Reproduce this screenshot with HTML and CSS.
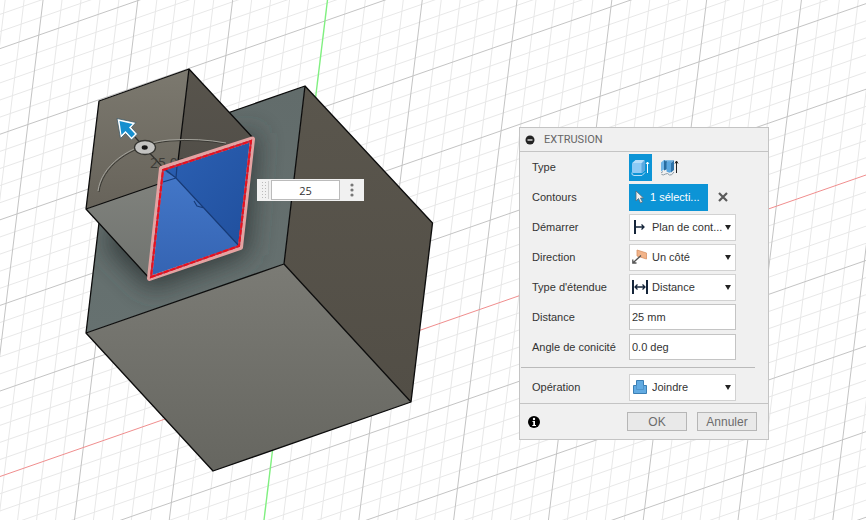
FILE: index.html
```html
<!DOCTYPE html>
<html lang="fr">
<head>
<meta charset="utf-8">
<title>Extrusion</title>
<link rel="stylesheet" href="styles.css">
</head>
<body>
<main class="viewport">
  <svg class="scene" viewBox="0 0 866 520" preserveAspectRatio="xMinYMin slice" aria-hidden="true">
    <defs>
      <linearGradient id="top-face" x1="0" y1="0" x2="0" y2="1"><stop offset="0" stop-color="#7c796f"/><stop offset="1" stop-color="#67635a"/></linearGradient>
      <linearGradient id="side-face" x1="0" y1="0" x2="0" y2="1"><stop offset="0" stop-color="#58544c"/><stop offset="1" stop-color="#4c4a46"/></linearGradient>
      <linearGradient id="low-face" x1="0" y1="0" x2="0" y2="1"><stop offset="0" stop-color="#80827d"/><stop offset="1" stop-color="#70736f"/></linearGradient>
      <linearGradient id="cube-left" x1="0" y1="0" x2="0" y2="1"><stop offset="0" stop-color="#626c6b"/><stop offset="1" stop-color="#667170"/></linearGradient>
      <linearGradient id="cube-right" x1="0" y1="0" x2="0" y2="1"><stop offset="0" stop-color="#5a564d"/><stop offset="1" stop-color="#524e46"/></linearGradient>
      <linearGradient id="cube-low" x1="0" y1="0" x2="0" y2="1"><stop offset="0" stop-color="#7b7b75"/><stop offset="1" stop-color="#666660"/></linearGradient>
      <linearGradient id="blue-left" x1="0" y1="0" x2="0" y2="1"><stop offset="0" stop-color="#4478c9"/><stop offset="1" stop-color="#3463b2"/></linearGradient>
      <linearGradient id="blue-right" x1="0" y1="0" x2="1" y2="1"><stop offset="0" stop-color="#2c61b4"/><stop offset="1" stop-color="#204f9d"/></linearGradient>
      <clipPath id="left-clip"><path d="M305 86 107 155 86 333 284 264Z"/></clipPath>
      <filter id="soft" x="-50%" y="-50%" width="200%" height="200%"><feGaussianBlur stdDeviation="13"/></filter>
    </defs>
    <path class="grid-minor" id="grid-minor"/>
    <path class="grid-major" id="grid-major"/>
    <path class="axis-x" d="M0 476.500 866 175"/>
    <path class="axis-y" d="M327.500 0 264 520"/>

    <path fill="url(#cube-left)" d="M305 86 107 155 86 333 284 264Z"/>
    <g clip-path="url(#left-clip)"><path filter="url(#soft)" fill="#363e3c" d="M160 160 258 132 248 254 150 290 104 244Z"/></g>
    <path fill="url(#cube-right)" d="M305 86 432.500 223 411 402 284 264Z"/>
    <path fill="url(#cube-low)" d="M284 264 411 402 213 471 86 333Z"/>
    <path class="edge" d="M305 86 107 155 86 333 213 471 411 402 432.500 223Z M305 86 284 264 M86 333 284 264 411 402"/>

    <path fill="url(#top-face)" d="M99 101 189 69 176 178 86 209Z"/>
    <path fill="url(#side-face)" d="M189 69 253 138 240 247 176 178Z"/>
    <path fill="url(#low-face)" d="M86 209 176 178 240 247 150 279Z"/>
    <path class="edge" d="M253 138 189 69 99 101 86 209 150 279 M189 69 176 178 86 209 M176 178 240 247"/>
    <path class="arc-shade" d="M99 192C102 168 128 145 170 141Q200 139 226 144"/>
    <path class="arc" d="M98 191C101 167 127 144 169 140Q200 138 226 143"/>
    <path class="stem" d="M135 137 200 208"/>
    <text class="measure" x="150" y="168">25.00</text>

    <path fill="url(#blue-left)" d="M162 169 176 178 240 247 150 279Z"/>
    <path fill="url(#blue-right)" d="M162 169 253 139 240 247 176 178Z"/>
    <path class="hidden-edge" d="M162 167 176 178 240 247M176 178 177 166M163 182 176 178M194 201 197 206 204 208"/>
    <path class="glow" d="M161.500 168.500 252.500 139 240.500 247.500 149.500 278.500Z"/>
    <path class="selected" d="M163 170 251 141 239 246 151 277Z"/>
    <path class="selected-dash" d="M163 170 251 141 239 246 151 277Z"/>

    <ellipse cx="145" cy="147.500" rx="10.500" ry="7" fill="#c3c3c1" stroke="#343430" stroke-width="1.300"/>
    <ellipse cx="144.700" cy="147.500" rx="3" ry="2.200" fill="#151515"/>
    <path d="M117 118.500 136 122.500 131.500 127.500 137.500 134 131.500 140 125.500 133.500 120.500 138.500Z" fill="#fff" stroke="#3d5a68" stroke-width=".8"/>
    <path d="M119.500 121 132.500 124 129 127.500 135 134 131.500 137.500 125.500 131 121.500 135Z" fill="#168fcf"/>
  </svg>

  <div class="value-box">
    <span class="grip"></span>
    <input class="value-input" type="text" value="25" aria-label="Valeur de distance">
    <button class="more" type="button" aria-label="Options">
      <svg width="6" height="16" viewBox="0 0 6 16"><g fill="#777"><circle cx="3" cy="3" r="1.600"/><circle cx="3" cy="8" r="1.600"/><circle cx="3" cy="13" r="1.600"/></g></svg>
    </button>
  </div>

  <form class="panel">
    <header class="panel-head">
      <button class="collapse" type="button" aria-label="Réduire"><svg width="10" height="10" viewBox="0 0 10 10"><circle cx="5" cy="5" r="4.500" fill="#222"/><path d="M2.500 5h5" stroke="#fff" stroke-width="1.200"/></svg></button>
      <h1 class="title">EXTRUSION</h1>
    </header>
    <div class="rows">
      <div class="row">
        <span class="label">Type</span>
        <div class="types">
          <button class="type active" type="button" aria-label="Extrusion solide">
            <svg width="19" height="19" viewBox="0 0 19 19"><path d="M1 14.500v2l2 1h8l3-3" fill="none" stroke="#b8ddf7" stroke-width="1"/><path d="M1 6Q1 5 2 4.300L4 2.800Q5 2 6 2h6.500Q14 2 14 3.500V12l-3 3H2q-1 0-1-1Z" fill="#8dcaf5"/><path d="M1.500 5 4.500 2H13l-2.500 3Z" fill="#b4ddfa"/><path d="M10.500 5.500 13.500 2.500Q14 3 14 3.500V12l-3.500 3Z" fill="#5ba8df"/><path d="M16.500 15V4M15 6l1.500-2L18 6" fill="none" stroke="#fff"/></svg>
          </button>
          <button class="type" type="button" aria-label="Extrusion fine">
            <svg width="19" height="19" viewBox="0 0 19 19"><path d="M1 15l2-1.500M1.500 16.500q2 1 4-.5t4 1q2 1 4.500-3" fill="none" stroke="#8c9aa5"/><path d="M1 4.500 4 2v9.500l-3 2Z" fill="#70b5e7"/><path d="M4 2h3.500v9L4 12.500Z" fill="#286c9f"/><path d="M6.500 4.500 9 2h4.500l-2.500 3v9q-1.500 1.500-4.500-.5Z" fill="#5aa6de"/><path d="M11 5 14 2v10l-3 2.500Z" fill="#2d73a9"/><path d="M4 2h9.500l-1.500 1.200H5.500Z" fill="#89bfe5"/><path d="M16.500 15V3M15 5.500l1.500-2.500L18 5.500" fill="none" stroke="#222"/></svg>
          </button>
        </div>
      </div>
      <div class="row">
        <span class="label">Contours</span>
        <div class="selection">
          <button class="pick" type="button">
            <svg width="10" height="14" viewBox="0 0 10 14"><path d="M1 1v10l2.500-2.500 2 4.500 2-1-2-4h3Z" fill="#eee" stroke="#596a76" stroke-width=".8"/></svg>
            <span>1 sélecti...</span>
          </button>
          <button class="clear" type="button" aria-label="Effacer la sélection"><svg width="10" height="10" viewBox="0 0 10 10"><path d="m1 1 8 8M9 1 1 9" stroke="#5a5a5a" stroke-width="2.200"/></svg></button>
        </div>
      </div>
      <div class="row">
        <label class="label" for="start">Démarrer</label>
        <div class="combo">
          <svg class="icon" width="16" height="16" viewBox="0 0 16 16"><path d="M3 1v14" stroke="#15253a" stroke-width="2"/><path d="M3 8h9M9.500 5.500 12 8l-2.500 2.500" fill="none" stroke="#15253a" stroke-width="1.300"/></svg>
          <select id="start"><option>Plan de cont...</option></select>
        </div>
      </div>
      <div class="row">
        <label class="label" for="direction">Direction</label>
        <div class="combo">
          <svg class="icon" width="16" height="16" viewBox="0 0 16 16"><path d="m5 1 9.500 3v6L5 7Z" fill="#f2b48a" stroke="#d89264" stroke-width=".8"/><path d="M9 6.500 .8 14M.8 10.500V14h3.700" fill="none" stroke="#555" stroke-width="1.300"/></svg>
          <select id="direction"><option>Un côté</option></select>
        </div>
      </div>
      <div class="row">
        <label class="label" for="extent">Type d'étendue</label>
        <div class="combo">
          <svg class="icon" width="16" height="16" viewBox="0 0 16 16"><path d="M1 1v14M15 1v14" stroke="#15253a" stroke-width="2"/><path d="M3 8h10M5.500 5.500 3 8l2.500 2.500M10.500 5.500 13 8l-2.500 2.500" fill="none" stroke="#15253a" stroke-width="1.300"/></svg>
          <select id="extent"><option>Distance</option></select>
        </div>
      </div>
      <div class="row">
        <label class="label" for="distance">Distance</label>
        <input class="field" id="distance" type="text" value="25 mm">
      </div>
      <div class="row">
        <label class="label" for="angle">Angle de conicité</label>
        <input class="field" id="angle" type="text" value="0.0 deg">
      </div>
      <hr class="divider">
      <div class="row">
        <label class="label" for="operation">Opération</label>
        <div class="combo">
          <svg class="icon" width="16" height="16" viewBox="0 0 16 16"><path d="M4.500 1.500h7v5h3v8H1.500v-8h3Z" fill="#62abe2" stroke="#3b7fb4"/><path d="M4.500 6.500v4h7v-4" fill="none" stroke="#4c91c6" stroke-width=".8"/></svg>
          <select id="operation"><option>Joindre</option></select>
        </div>
      </div>
    </div>
    <footer class="panel-foot">
      <button class="info" type="button" aria-label="Informations"><svg width="12" height="12" viewBox="0 0 12 12"><circle cx="6" cy="6" r="6" fill="#000"/><circle cx="6" cy="3" r="1.200" fill="#fff"/><path d="M4.500 5H7v4h1v1H4.300V9h1V6h-.8Z" fill="#fff"/></svg></button>
      <button class="action" type="button">OK</button>
      <button class="action" type="button">Annuler</button>
    </footer>
  </form>
</main>
<script src="grid.js"></script>
</body>
</html>
```
FILE: grid.js
```js
// Ground plane: origin where the axes cross, one vector per major cell.
const origin = [281.3, 378.6];
const u = [99, -34.5];
const v = [-10.9, 89.4];
const reach = 9;
const divisions = 5;

const point = (a, b) =>
  [origin[0] + a * u[0] + b * v[0], origin[1] + a * u[1] + b * v[1]]
    .map(n => n.toFixed(1)).join(" ");

let major = "";
let minor = "";
for (let i = -reach * divisions; i <= reach * divisions; i++) {
  const k = i / divisions;
  const lines = `M${point(k, -reach)}L${point(k, reach)}M${point(-reach, k)}L${point(reach, k)}`;
  if (i === 0) continue;
  if (i % divisions === 0) major += lines;
  else minor += lines;
}
document.getElementById("grid-major").setAttribute("d", major);
document.getElementById("grid-minor").setAttribute("d", minor);
```
FILE: styles.css
```css
* { box-sizing: border-box; }
body { margin: 0; background: #fff; font: 11px/16px "Liberation Sans", Arial, sans-serif; color: #333; }
button, input, select { font: inherit; color: inherit; margin: 0; }
button { padding: 0; border: 0; background: none; }
svg { display: block; }

.viewport { position: relative; height: 100vh; min-height: 440px; overflow: hidden; }
.scene { width: 100%; height: 100%; }
.grid-minor, .grid-major, .axis-x, .axis-y, .edge, .stem, .hidden-edge, .arc, .arc-shade { fill: none; }
.grid-minor { stroke: #e8e8e8; }
.grid-major { stroke: #c4c4c4; }
.axis-x { stroke: #f08e8e; }
.axis-y { stroke: #80f080; stroke-width: 1.4; }
.edge { stroke: #0c0c0c; stroke-width: 1.3; stroke-linejoin: round; }
.arc { stroke: #a3a29b; stroke-width: 1; }
.arc-shade { stroke: #393833; stroke-width: 1; }
.stem { stroke: #30302d; stroke-width: 1.2; }
.measure { font: 14px "Open Sans", sans-serif; fill: #3b3a36; }
.hidden-edge { stroke: #173b78; stroke-width: 1.2; }
.glow { fill: none; stroke: #e3a3a2; stroke-width: 5; stroke-linejoin: round; }
.selected { fill: none; stroke: #b8304a; stroke-width: 2; }
.selected-dash { fill: none; stroke: #e8101e; stroke-width: 2; stroke-dasharray: 5 2; }

.value-box { position: absolute; left: 257px; top: 179px; display: flex; align-items: center; width: 107px; height: 22px; background: #f1f1f1; }
.grip { width: 8px; height: 18px; margin: 0 2px 0 4px; border-right: 1px solid #d0d0d0; background: radial-gradient(circle, #bbb 30%, transparent 40%) 0 0 / 3px 3px; }
.value-input { width: 69px; height: 20px; padding: 0; border: 1px solid #bbb; background: #fff; text-align: center; font: 11px "Open Sans", sans-serif; }
.more { flex: 1; display: flex; justify-content: center; }

.panel { position: absolute; top: 127px; right: 97px; width: 250px; border: 1px solid #c4c4c4; background: #f0f0f0; }
.panel-head { display: flex; align-items: center; gap: 9px; height: 24px; padding-left: 5px; border-bottom: 1px solid #c4c4c4; }
.title { margin: 0; font: 11px/16px Roboto, sans-serif; color: #666; }
.row { display: flex; align-items: center; height: 30px; padding: 0 32px 0 12px; }
.label { width: 97px; flex: none; white-space: nowrap; }
.types { display: flex; gap: 6px; }
.type { display: grid; place-items: center; width: 23px; height: 27px; }
.active { background: #0c94d6; }
.selection { display: flex; align-items: center; gap: 10px; }
.pick { display: flex; align-items: center; gap: 5px; width: 79px; height: 27px; padding: 0 6px; background: #0c94d6; color: #fff; white-space: nowrap; }
.pick svg { flex: none; }
.combo { position: relative; flex: 1; height: 27px; }
.icon { position: absolute; left: 3px; top: 5px; pointer-events: none; }
.combo::after { content: ""; position: absolute; right: 5px; top: 11px; border: 3px solid transparent; border-top: 5px solid #222; border-bottom: 0; }
.combo select { appearance: none; display: block; width: 100%; height: 100%; padding: 0 10px 0 22px; border: 1px solid #d2d2d2; border-radius: 0; background: #fff; }
.field { flex: 1; min-width: 0; height: 26px; padding: 0 2px; border: 1px solid #c4c4c4; background: #fff; }
.divider { height: 1px; margin: 5px 13px 4px 1px; border: 0; background: #bababa; }
.panel-foot { display: flex; align-items: center; gap: 10px; height: 36px; margin-top: 1px; padding: 0 11px 0 8px; border-top: 1px solid #c4c4c4; }
.info { margin-right: auto; }
.action { width: 60px; height: 19px; border: 1px solid #b6b6b6; background: #e9e9e9; color: #6c6c6c; font-size: 12px; }
```
